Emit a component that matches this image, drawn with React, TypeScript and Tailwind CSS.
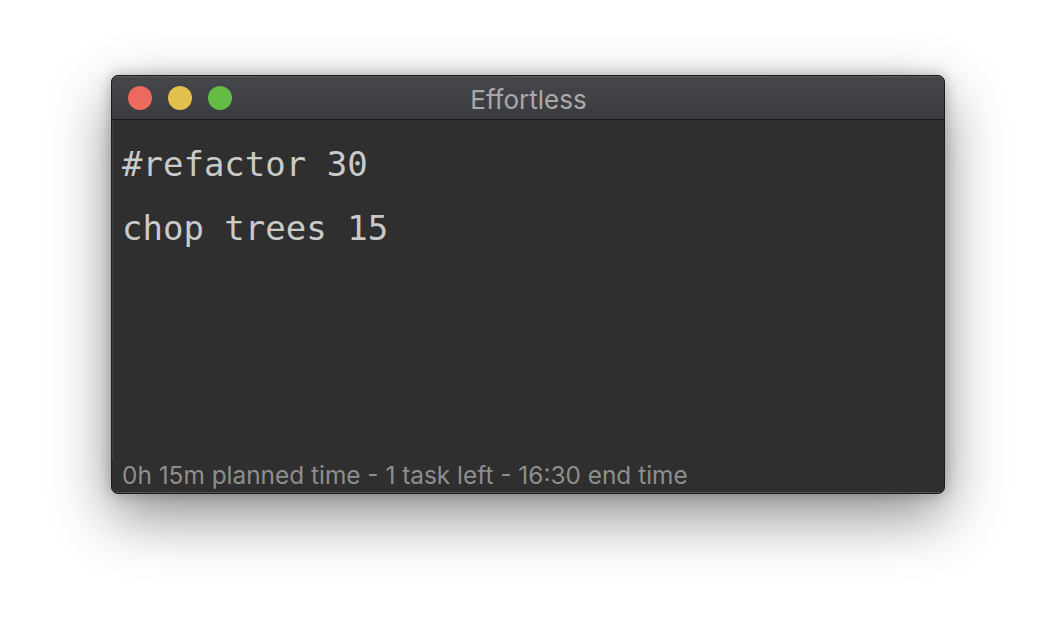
export default function App() {
  return (
    <div className="h-[642px] w-[1056px] bg-white pl-[111px] pt-[75px]">
      <div className="flex h-[419px] w-[834px] flex-col overflow-hidden rounded-[7px] border border-[#1c1c1e] bg-[#2f2f2f] shadow-[0_22px_60px_rgba(0,0,0,0.45),0_0_14px_rgba(0,0,0,0.25)]">
        {/* Title bar */}
        <div className="relative flex h-[44px] shrink-0 items-center border-b border-[#1a1a1a] bg-gradient-to-b from-[#46474b] to-[#3a3b3f] shadow-[inset_0_1px_0_rgba(255,255,255,0.12)]">
          <div className="flex items-center gap-[16px] pl-[16px]">
            <span className="h-[24px] w-[24px] rounded-full bg-[#ee6a5f]" />
            <span className="h-[24px] w-[24px] rounded-full bg-[#e3c04e]" />
            <span className="h-[24px] w-[24px] rounded-full bg-[#64bc47]" />
          </div>
          <div className="absolute inset-0 flex items-center justify-center pl-[1px] pt-[3px] font-['Inter','Liberation_Sans',sans-serif] text-[26px] text-[#a9a9ab]">
            Effortless
          </div>
        </div>

        {/* Editor */}
        <div className="flex flex-1 flex-col pl-[10px] pt-[22px] font-['DejaVu_Sans_Mono',monospace] text-[34px] leading-[64px] text-[#cacaca] shadow-[inset_1px_0_0_rgba(255,255,255,0.08)]">
          <div className="-mt-[10px]">#refactor 30</div>
          <div>chop trees 15</div>
        </div>

        {/* Status */}
        <div className="shrink-0 border-b border-[#555] pb-[2px] pl-[10px] font-['Inter','Liberation_Sans',sans-serif] text-[24.4px] leading-[30px] text-[#8e8e8e]">
          0h 15m planned time - 1 task left - 16:30 end time
        </div>
      </div>
    </div>
  );
}
